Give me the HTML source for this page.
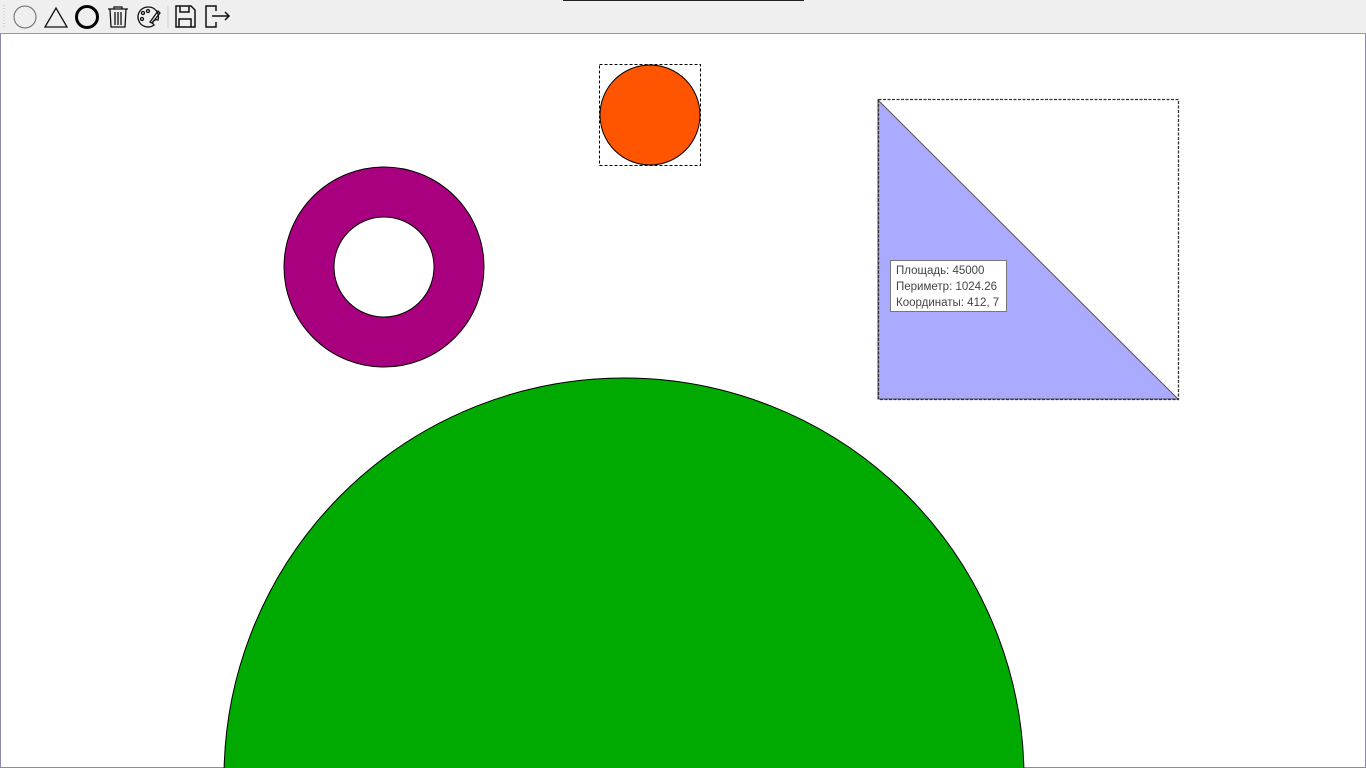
<!DOCTYPE html>
<html style="overflow:hidden;width:1366px;height:768px"><head><meta charset="utf-8"><style>
body{margin:0;width:1366px;height:768px;overflow:hidden;background:#fff;font-family:"Liberation Sans",sans-serif;position:relative}
#tb{position:absolute;left:0;top:0;width:1366px;height:33px;background:#efefef;border-bottom:1px solid #9a9a9a}
#cv{position:absolute;left:0;top:34px;width:1364px;height:733px;border:1px solid #8a8aa8;border-top:none;background:#fff}
#tip{position:absolute;left:890px;top:260px;font-size:11.5px;line-height:16px;color:#444;padding:2px 0 0 5px;box-sizing:border-box;width:117px;height:52px;border:1px solid #777;background:#fff}
svg{display:block}
</style></head><body>
<div id="tb">
<div style="position:absolute;left:563px;top:0;width:241px;height:1px;background:#222"></div>
<svg width="240" height="33" style="position:absolute;left:0;top:0">
<line x1="4" y1="5" x2="4" y2="28" stroke="#bbb" stroke-dasharray="1 2"/>
<circle cx="25" cy="17" r="11" fill="none" stroke="#666" stroke-width="1"/>
<path d="M45 27 L56 8 L67 27 Z" fill="none" stroke="#111" stroke-width="1.3"/>
<circle cx="87" cy="17" r="10.5" fill="none" stroke="#000" stroke-width="3"/>
<g fill="none" stroke="#111" stroke-width="1.3"><path d="M108 9h20M114 9v-2h8v2M110 9l1 18h14l1-18M115 12v13M118 12v13M121 12v13"/></g>
<g fill="none" stroke="#111" stroke-width="1.3"><path d="M148 7a10 10 0 1 0 6 18c-3-3 0-6 4-5a10 10 0 0 0-10-13z"/><circle cx="143" cy="13" r="1.5"/><circle cx="142" cy="19" r="1.5"/><circle cx="148" cy="11" r="1.5"/><path d="M150 22l8-11 2 2-8 10z"/></g>
<line x1="168" y1="6" x2="168" y2="28" stroke="#ccc"/>
<g fill="none" stroke="#111" stroke-width="1.5"><path d="M176 6h15l4 4v17h-19z M180 6v6h9v-6 M179 27v-8h12v8"/></g>
<g fill="none" stroke="#111" stroke-width="1.5"><path d="M216 11v-5h-10v21h10v-5 M212 16h17 M225 12l4 4-4 4"/></g>
</svg>
</div>
<div id="cv"></div>
<svg width="1366" height="768" style="position:absolute;left:0;top:0">
<circle cx="624" cy="778" r="400" fill="#00aa00" stroke="#000"/>
<circle cx="384" cy="267" r="75" fill="none" stroke="#a8007e" stroke-width="50"/>
<circle cx="384" cy="267" r="100" fill="none" stroke="#000"/>
<circle cx="384" cy="267" r="50" fill="#fff" stroke="#000"/>
<circle cx="650" cy="115" r="50" fill="#ff5500" stroke="#000"/>
<rect x="599.5" y="64.5" width="101" height="101" fill="none" stroke="#000" stroke-dasharray="3 2"/>
<path d="M878 100 L878 399 L1178 399 Z" fill="#aaaaff" stroke="#555"/>
<rect x="878.5" y="99.5" width="300" height="300" fill="none" stroke="#333" stroke-width="1.3" stroke-dasharray="3 1.5"/>
</svg>
<div id="tip">Площадь: 45000<br>Периметр: 1024.26<br>Координаты: 412, 7</div>
</body></html>
